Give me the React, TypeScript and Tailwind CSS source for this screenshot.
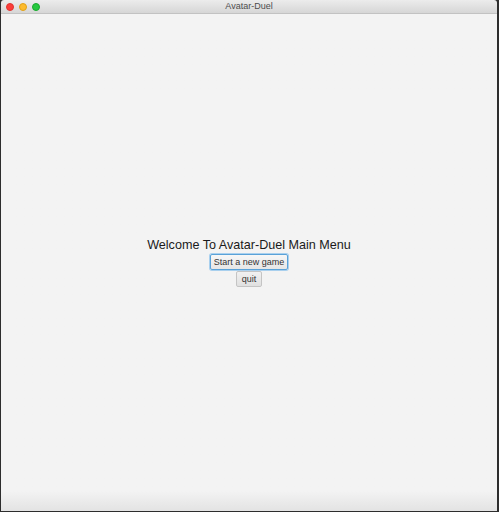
export default function App() {
  return (
    <div className="w-[499px] h-[512px] bg-[#2d2d2d] pl-px pr-[2px] pb-px flex flex-col font-['Liberation_Sans',sans-serif]">
      {/* Title bar */}
      <div className="relative h-[14px] shrink-0 bg-gradient-to-b from-[#ececec] to-[#d6d6d6] border-b border-[#c2c2c2] flex items-center justify-center rounded-t-[3px]">
        <div className="absolute left-[5px] top-[3px] flex gap-[5px]">
          <span className="w-[8px] h-[8px] rounded-full bg-[#fc3d39] border border-[#e0332f]" />
          <span className="w-[8px] h-[8px] rounded-full bg-[#fdbb2d] border border-[#e1a116]" />
          <span className="w-[8px] h-[8px] rounded-full bg-[#26c83f] border border-[#17a92d]" />
        </div>
        <span className="text-[9px] leading-none text-[#4d4d4d]">Avatar-Duel</span>
      </div>

      {/* Content */}
      <div className="flex-1 bg-gradient-to-b from-[#f3f3f3] from-[96%] to-[#e3e3e3] flex flex-col items-center justify-center">
        <div className="text-[12.6px] leading-[15px] text-[#1a1a1a]">Welcome To Avatar-Duel Main Menu</div>
        <button className="mt-[1px] h-[16px] px-[3px] text-[9px] leading-none text-[#333] bg-gradient-to-b from-[#f7f7f7] to-[#e6e6e6] border border-[#5aa2d8] rounded-[2px] shadow-[0_0_0_1px_#a9d0ee]">
          Start a new game
        </button>
        <button className="mt-[1px] h-[16px] px-[5px] text-[9px] leading-none text-[#333] bg-gradient-to-b from-[#f1f1f1] to-[#e0e0e0] border border-[#c4c4c4] rounded-[2px]">
          quit
        </button>
      </div>
    </div>
  );
}
